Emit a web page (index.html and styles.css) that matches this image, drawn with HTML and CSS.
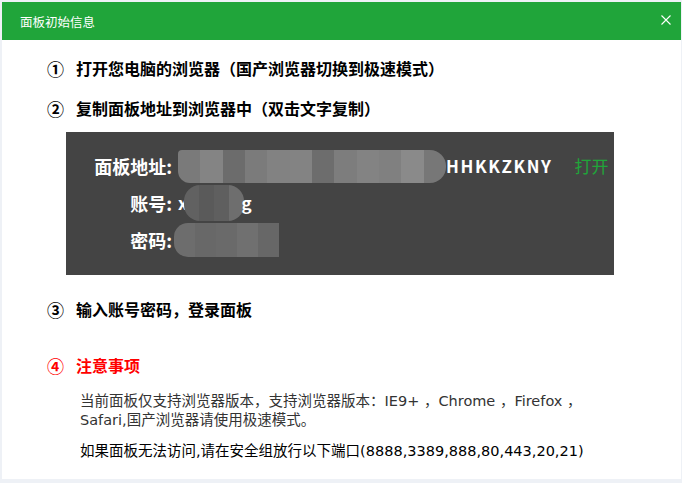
FILE: index.html
```html
<!DOCTYPE html>
<html lang="zh-CN">
<head>
    <meta charset="UTF-8">
    <title>面板初始信息</title>
    <link rel="stylesheet" href="styles.css">
</head>
<body>
    <div class="dialog">
        <div class="dialog-header">
            <span class="dialog-title">面板初始信息</span>
            <span class="dialog-close">
                <svg width="10" height="10" viewBox="0 0 10 10"><path d="M0.5 0.5L9.5 9.5M9.5 0.5L0.5 9.5" stroke="#fff" stroke-width="1.1"/></svg>
            </span>
        </div>
        <div class="dialog-body">
            <div class="step step-1"><span class="num">①</span><span>打开您电脑的浏览器（国产浏览器切换到极速模式）</span></div>
            <div class="step step-2"><span class="num">②</span><span>复制面板地址到浏览器中（双击文字复制）</span></div>

            <div class="info-box">
                <div class="info-row">
                    <span class="label">面板地址:</span>
                    <span class="value">
                        <span class="blur blur-url">
                            <i style="background:#7a7a7a"></i><i style="background:#848484"></i><i style="background:#6c6c6c"></i><i style="background:#7b7b7b"></i><i style="background:#828282"></i><i style="background:#838383"></i><i style="background:#6d6d6d"></i><i style="background:#7d7d7d"></i><i style="background:#838383"></i><i style="background:#808080"></i><i style="background:#8a8a8a"></i><i style="background:#777"></i>
                        </span>
                        <span class="addr">HHKKZKNY</span>
                        <a class="open-link">打开</a>
                    </span>
                </div>
                <div class="info-row">
                    <span class="label">账号:</span>
                    <span class="value">
                        <span class="peek">x</span>
                        <span class="blur blur-user">
                            <i style="background:#616161"></i><i style="background:#5a5a5a"></i><i style="background:#5f5f5f"></i><i style="background:#6e6e6e"></i>
                        </span>
                        <span class="peek">g</span>
                    </span>
                </div>
                <div class="info-row">
                    <span class="label">密码:</span>
                    <span class="value">
                        <span class="blur blur-pass">
                            <i style="background:#6d6d6d"></i><i style="background:#686868"></i><i style="background:#6a6a6a"></i><i style="background:#707070"></i><i style="background:#676767"></i>
                        </span>
                    </span>
                </div>
            </div>

            <div class="step step-3"><span class="num">③</span><span>输入账号密码，登录面板</span></div>
            <div class="step step-4 warn"><span class="num">④</span><span>注意事项</span></div>

            <div class="notes">
                <p>当前面板仅支持浏览器版本，支持浏览器版本：IE9+ ，Chrome ，Firefox ，<br>Safari,国产浏览器请使用极速模式。</p>
                <p class="ports">如果面板无法访问,请在安全组放行以下端口(8888,3389,888,80,443,20,21)</p>
            </div>
        </div>
    </div>
</body>
</html>
```

FILE: styles.css
```css
body {
  margin: 0;
  background-color: #eef1f6;
  font-family: "Noto Sans CJK SC", "Noto Sans", sans-serif;
}

.dialog {
  width: 679px;
  height: 477px;
  margin: 2px 0 0 2px;
  background-color: #fff;
  display: flex;
  flex-direction: column;
  overflow: hidden;
}

.dialog-header {
  height: 38px;
  background-color: #20a53a;
  color: #fff;
  display: flex;
  align-items: center;
  justify-content: space-between;
  padding: 0 10px 0 18px;
}

.dialog-title {
  font-size: 12.5px;
}

.dialog-close {
  display: flex;
  margin-top: -2px;
}

.dialog-body {
  padding: 16px 0 0 45px;
  color: #000;
}

.step {
  display: flex;
  align-items: center;
  height: 24px;
  font-size: 16px;
  font-weight: bold;
}

.step .num {
  width: 29px;
  font-size: 17px;
}

.step-2 {
  margin-top: 16px;
}

.step-3 {
  margin-top: 22px;
}

.step-4 {
  margin-top: 32px;
}

.warn {
  color: #ff0000;
}

.info-box {
  width: 548px;
  height: 143px;
  box-sizing: border-box;
  margin: 12px 0 0 19px;
  padding-top: 15px;
  background-color: #444;
  color: #fff;
}

.info-row {
  display: flex;
  align-items: center;
  height: 37px;
}

.info-row .label {
  width: 106px;
  text-align: right;
  font-size: 18px;
  font-weight: bold;
}

.info-row .value {
  display: flex;
  align-items: center;
  margin-left: 6px;
  font-size: 17px;
  font-weight: bold;
}

.blur {
  display: flex;
  overflow: hidden;
}

.blur i {
  flex: 1;
}

.blur-url {
  width: 268px;
  height: 33px;
  border-radius: 4px 16px 16px 12px;
  margin-top: 2px;
}

.addr {
  letter-spacing: 1.6px;
}

.open-link {
  margin-left: 22px;
  color: #20a53a;
  font-weight: normal;
  cursor: pointer;
}

.peek {
  color: #fff;
}

.blur-user {
  width: 60px;
  height: 36px;
  border-radius: 16px;
  margin: 0 -2px 0 -4px;
}

.blur-pass {
  width: 105px;
  height: 34px;
  border-radius: 14px 0 0 14px;
  margin-left: -4px;
}

.notes {
  margin: 15px 0 0 33px;
  width: 560px;
  font-family: "DejaVu Sans", "Noto Sans CJK SC", sans-serif;
  font-size: 14.5px;
  color: #333;
}

.notes p {
  margin: 0;
  line-height: 19px;
}

.notes .ports {
  margin-top: 12px;
  color: #000;
  font-size: 14.5px;
}
```
